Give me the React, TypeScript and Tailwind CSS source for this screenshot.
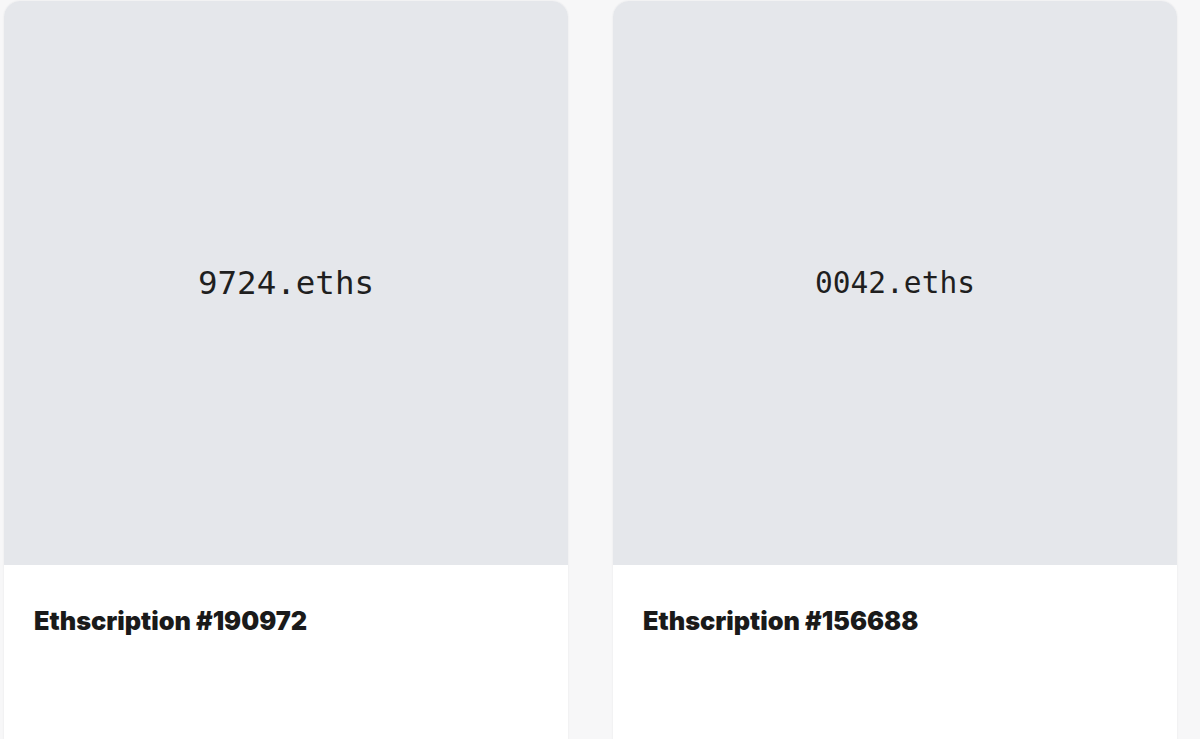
import React from "react";

const items = [
  { name: "9724.eths", title: "Ethscription #190972", size: "text-[32.5px]" },
  { name: "0042.eths", title: "Ethscription #156688", size: "text-[29.5px]" },
];

export default function App() {
  return (
    <div className="w-[1200px] h-[739px] overflow-hidden bg-[#f7f7f8]">
      <div className="grid grid-cols-2 gap-[45px] pl-[4px] pr-[23px] pt-[1px]">
        {items.map((it) => (
          <div
            key={it.title}
            className="rounded-2xl overflow-hidden bg-white shadow-[0_0_2px_rgba(0,0,0,0.08)] h-[760px]"
          >
            <div className="h-[564px] bg-[#e5e7eb] flex items-center justify-center">
              <span
                className={`${it.size} text-[#1f1f1f]`}
                style={{ fontFamily: '"DejaVu Sans Mono", monospace' }}
              >
                {it.name}
              </span>
            </div>
            <div className="px-[30px] pt-[40px]">
              <h2
                className="text-[25.3px] leading-8 font-black text-[#1a1a1a]"
                style={{ fontFamily: "Inter, sans-serif" }}
              >
                {it.title}
              </h2>
            </div>
          </div>
        ))}
      </div>
    </div>
  );
}
